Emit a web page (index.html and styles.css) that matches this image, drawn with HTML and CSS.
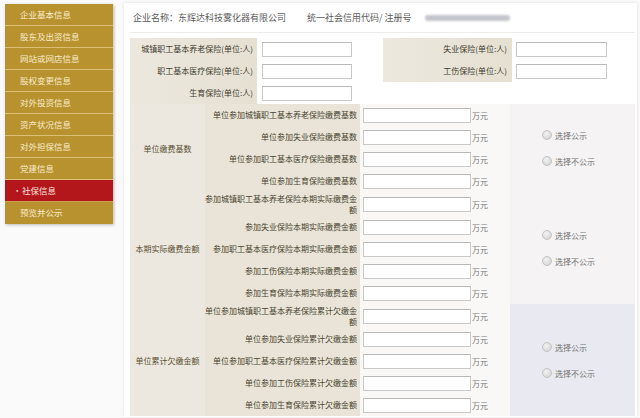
FILE: index.html
```html
<!DOCTYPE html>
<html lang="zh-CN">
<head>
<meta charset="utf-8">
<link rel="stylesheet" href="styles.css">
</head>
<body>
<div class="page">
  <nav class="side">
    <ul>
      <li>企业基本信息</li>
      <li>股东及出资信息</li>
      <li>网站或网店信息</li>
      <li>股权变更信息</li>
      <li>对外投资信息</li>
      <li>资产状况信息</li>
      <li>对外担保信息</li>
      <li>党建信息</li>
      <li class="active">社保信息</li>
      <li>预览并公示</li>
    </ul>
  </nav>
  <main class="main">
    <div class="head">
      <span class="company">企业名称：东辉达科技雾化器有限公司</span>
      <span class="code">统一社会信用代码/ 注册号</span>
      <span class="blur"></span>
    </div>
    <div class="top-form">
      <div class="lbl">城镇职工基本养老保险(单位:人)</div>
      <div class="inp"><span class="box"></span></div>
      <div class="lbl">失业保险(单位:人)</div>
      <div class="inp r"><span class="box"></span></div>
      <div class="lbl">职工基本医疗保险(单位:人)</div>
      <div class="inp"><span class="box"></span></div>
      <div class="lbl">工伤保险(单位:人)</div>
      <div class="inp r"><span class="box"></span></div>
      <div class="lbl">生育保险(单位:人)</div>
      <div class="inp"><span class="box"></span></div>
      <div class="empty"></div>
      <div class="empty"></div>
    </div>

    <section class="group g4">
      <div class="glabel">单位缴费基数</div>
      <div class="sub">单位参加城镇职工基本养老保险缴费基数</div>
      <div class="cell"><span class="box wide"></span><span class="unit">万元</span></div>
      <div class="sub">单位参加失业保险缴费基数</div>
      <div class="cell"><span class="box wide"></span><span class="unit">万元</span></div>
      <div class="sub">单位参加职工基本医疗保险缴费基数</div>
      <div class="cell"><span class="box wide"></span><span class="unit">万元</span></div>
      <div class="sub">单位参加生育保险缴费基数</div>
      <div class="cell"><span class="box wide"></span><span class="unit">万元</span></div>
      <div class="radios">
        <label class="radio"><span class="dot"></span>选择公示</label>
        <label class="radio"><span class="dot"></span>选择不公示</label>
      </div>
    </section>

    <section class="group g5">
      <div class="glabel">本期实际缴费金额</div>
      <div class="sub two">参加城镇职工基本养老保险本期实际缴费金额</div>
      <div class="cell"><span class="box wide"></span><span class="unit">万元</span></div>
      <div class="sub">参加失业保险本期实际缴费金额</div>
      <div class="cell"><span class="box wide"></span><span class="unit">万元</span></div>
      <div class="sub">参加职工基本医疗保险本期实际缴费金额</div>
      <div class="cell"><span class="box wide"></span><span class="unit">万元</span></div>
      <div class="sub">参加工伤保险本期实际缴费金额</div>
      <div class="cell"><span class="box wide"></span><span class="unit">万元</span></div>
      <div class="sub">参加生育保险本期实际缴费金额</div>
      <div class="cell"><span class="box wide"></span><span class="unit">万元</span></div>
      <div class="radios">
        <label class="radio"><span class="dot"></span>选择公示</label>
        <label class="radio"><span class="dot"></span>选择不公示</label>
      </div>
    </section>

    <section class="group g5 last">
      <div class="glabel">单位累计欠缴金额</div>
      <div class="sub two">单位参加城镇职工基本养老保险累计欠缴金额</div>
      <div class="cell"><span class="box wide"></span><span class="unit">万元</span></div>
      <div class="sub">单位参加失业保险累计欠缴金额</div>
      <div class="cell"><span class="box wide"></span><span class="unit">万元</span></div>
      <div class="sub">单位参加职工基本医疗保险累计欠缴金额</div>
      <div class="cell"><span class="box wide"></span><span class="unit">万元</span></div>
      <div class="sub">单位参加工伤保险累计欠缴金额</div>
      <div class="cell"><span class="box wide"></span><span class="unit">万元</span></div>
      <div class="sub">单位参加生育保险累计欠缴金额</div>
      <div class="cell"><span class="box wide"></span><span class="unit">万元</span></div>
      <div class="radios">
        <label class="radio"><span class="dot"></span>选择公示</label>
        <label class="radio"><span class="dot"></span>选择不公示</label>
      </div>
    </section>
  </main>
</div>
</body>
</html>
```

FILE: styles.css
```css
* { box-sizing: border-box; }
html, body {
  margin: 0;
  padding: 0;
  background: #f3f3f3;
  font-family: "Noto Sans CJK SC", "Noto Sans", sans-serif;
}
.page {
  display: flex;
  align-items: flex-start;
  width: 640px;
  height: 418px;
  overflow: hidden;
  background: #fafafa;
}
.side {
  margin: 4px 0 0 5px;
  width: 108px;
  flex: none;
  background: #b8922f;
  box-shadow: 1px 1px 3px rgba(0,0,0,0.25);
}
.side ul {
  list-style: none;
  margin: 0;
  padding: 0;
}
.side li {
  height: 22px;
  line-height: 21px;
  padding-left: 15px;
  font-size: 8.5px;
  color: #f8eccd;
  border-bottom: 1px solid #dcbf74;
  white-space: nowrap;
}
.side li:last-child { border-bottom: none; }
.side li.active {
  background: #b3171c;
  color: #fbe3dc;
  padding-left: 8px;
  border-bottom-color: #c9a04c;
}
.side li.active::before {
  content: "•";
  display: inline-block;
  width: 9px;
  color: #f3c9c0;
}
.main {
  margin: 3px 0 0 11px;
  width: 513px;
  height: 414px;
  flex: none;
  background: #fff;
  box-shadow: 0 0 3px rgba(0,0,0,0.12);
  padding: 0 2px 0 6px;
}
.head {
  height: 30px;
  display: flex;
  align-items: center;
  padding-left: 3px;
  font-size: 9px;
  color: #5b5b5b;
  border-bottom: 1px solid #ececec;
}
.company { width: 174px; }
.code { width: 118px; }
.blur {
  display: block;
  width: 85px;
  height: 6px;
  background: #c4c4cc;
  border-radius: 3px;
  filter: blur(1.2px);
}
.top-form {
  margin-top: 5px;
  display: grid;
  grid-template-columns: 127px 126px 129px 1fr;
  grid-auto-rows: 22px;
}
.lbl {
  background: linear-gradient(90deg, #ece8de, #e6e0d2);
  text-align: right;
  padding-right: 4px;
  font-size: 8px;
  line-height: 22px;
  color: #3f3c30;
  white-space: nowrap;
}
.top-form .lbl:nth-child(3), .top-form .lbl:nth-child(7) { padding-right: 5px; }
.inp {
  display: flex;
  align-items: center;
  padding-left: 5px;
  background: #fff;
}
.inp.r { padding-left: 4px; }
.empty { background: #fff; }
.box {
  display: block;
  width: 90px;
  height: 15px;
  background: #fff;
  border: 1px solid #c9c9c9;
  border-top-color: #b9b9b9;
}
.inp.r .box { width: 91px; }
.box.wide { width: 108px; }
.group {
  display: grid;
  grid-template-columns: 75px 155px 150px 1fr;
}
.g4 { grid-template-rows: repeat(4, 22px); }
.g5 { grid-template-rows: 24px repeat(4, 22px); }
.glabel {
  grid-column: 1;
  grid-row: 1 / -1;
  background: #ece8df;
  font-size: 8px;
  color: #5a4f33;
  display: flex;
  align-items: center;
  justify-content: center;
  white-space: nowrap;
}
.sub {
  grid-column: 2;
  background: #e9e4d7;
  text-align: right;
  padding-right: 3px;
  font-size: 8px;
  line-height: 22px;
  color: #4a4532;
  white-space: nowrap;
}
.sub.two {
  white-space: normal;
  line-height: 11px;
  padding-top: 1px;
}
.cell {
  grid-column: 3;
  background: #f9f8f7;
  display: flex;
  align-items: center;
  padding-left: 3px;
}
.unit {
  margin-left: 1px;
  font-size: 8px;
  color: #777;
}
.radios {
  grid-column: 4;
  grid-row: 1 / -1;
  background: #f5f3f4;
  display: flex;
  flex-direction: column;
  justify-content: center;
  gap: 15px;
  padding-left: 32px;
}
.group.last .radios { background: #e9eaf1; }
.radio {
  display: flex;
  align-items: center;
  font-size: 8px;
  color: #707070;
  line-height: 11px;
  white-space: nowrap;
}
.dot {
  width: 10px;
  height: 10px;
  border-radius: 50%;
  margin-right: 3px;
  background: radial-gradient(circle at 40% 35%, #f2f2f2, #cfcfcf);
  border: 1px solid #c3c3c3;
}
```
